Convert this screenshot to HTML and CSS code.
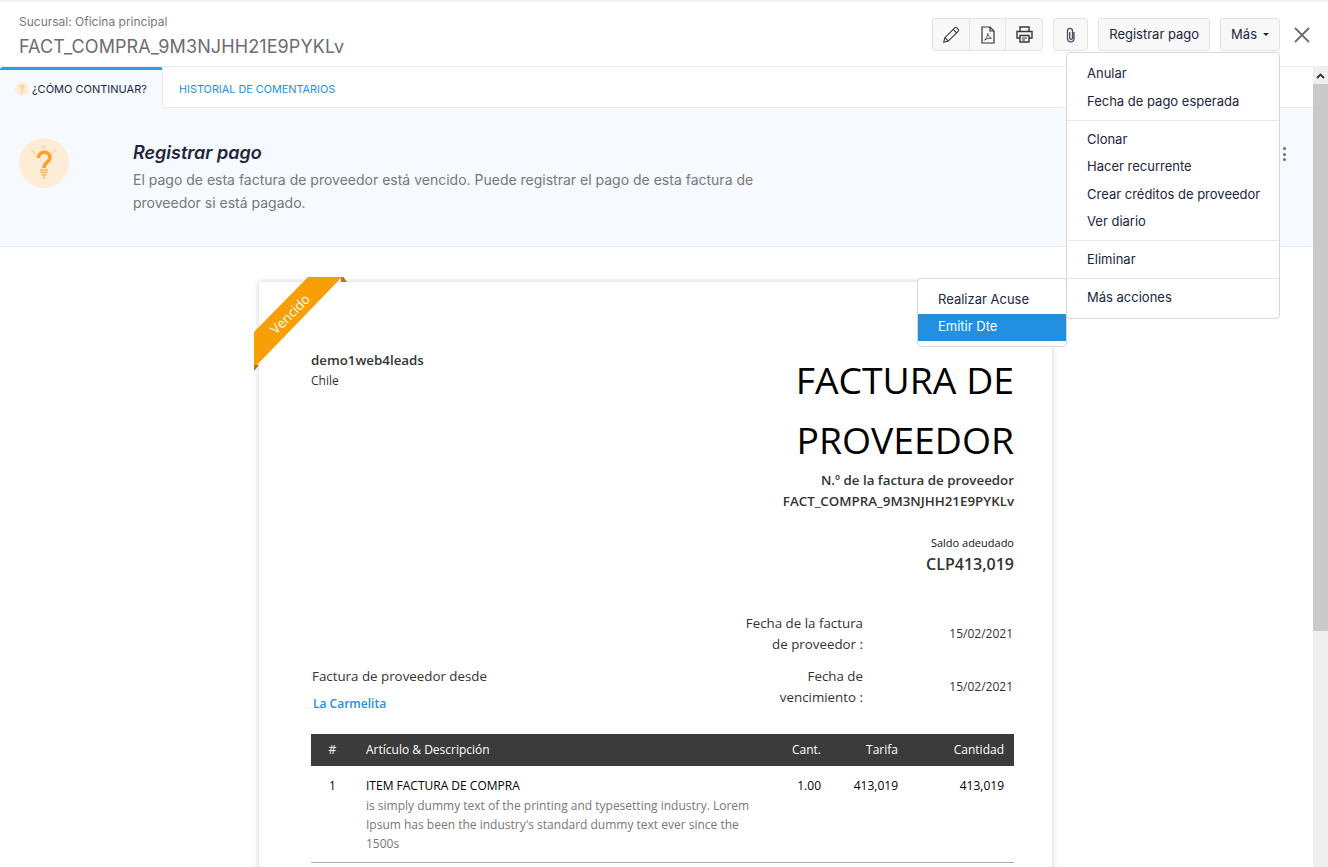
FILE: index.html
```html
<!DOCTYPE html>
<html>
<head>
  <meta charset="UTF-8">
  <title>Factura de proveedor</title>
  <link rel="stylesheet" href="styles.css">
</head>
<body>

  <div class="topBar">
    <div class="titleBlock">
      <div class="branchName">Sucursal: Oficina principal</div>
      <div class="billNumber">FACT_COMPRA_9M3NJHH21E9PYKLv</div>
    </div>
    <div class="actions">
      <div class="btnGroup">
        <span class="btn iconBtn">
          <svg width="18" height="18" viewBox="0 0 18 18" fill="none" stroke="#33343f" stroke-width="1.1"><path d="M1.7 16.3l1.2-4.6L12.7 1.9c.6-.6 1.5-.6 2.1 0l1.3 1.3c.6.6.6 1.5 0 2.1L6.3 15.1z"/><path d="M2.9 11.7l3.4 3.4M11.2 3.4l3.4 3.4"/></svg>
        </span>
        <span class="btn iconBtn">
          <svg width="14" height="18" viewBox="0 0 14 18" fill="none" stroke="#33343f" stroke-width="1.2"><path d="M1 1h8l4 4v12H1z"/><path d="M9 1v4h4"/><path d="M3.5 14c1.5-.8 3-3.5 3.3-6.5.4 2.5 1.6 4.2 3.7 4.8-2.2-.2-4.8.4-7 1.7z" stroke-width=".8"/></svg>
        </span>
        <span class="btn iconBtn">
          <svg width="17" height="17" viewBox="0 0 17 17" fill="none" stroke="#33343f" stroke-width="1.4"><path d="M4 5V1h9v4"/><path d="M4 12H1V5.5h15V12h-3"/><path d="M4 9.5h9V16H4z"/><path d="M6 12h5M6 14h3" stroke-width="1"/></svg>
        </span>
      </div>
      <span class="btn iconBtn clipBtn">
        <svg width="10" height="16" viewBox="0 0 10 16" fill="none" stroke="#4a4b5c" stroke-width="1.3"><path d="M8 5v6.5c0 4.5-6.5 4.5-6.5 0V4c0-3.5 5-3.5 5 0v7c0 1.8-2.800 1.8-2.800 0V5"/></svg>
      </span>
      <span class="btn textBtn">Registrar pago</span>
      <span class="btn textBtn moreBtn">Más <i class="caret"></i></span>
      <svg class="closeIcon" width="16" height="16" viewBox="0 0 16 16" stroke="#6c6c72" stroke-width="1.8"><path d="M1 1l14 14M15 1L1 15"/></svg>
    </div>
  </div>

  <div class="mainArea">
    <div class="pane">
      <div class="tabs">
        <div class="tab tabActive">
          <svg class="tabIcon" width="14" height="14" viewBox="0 0 14 14"><circle cx="7" cy="7" r="7" fill="#ffecd6"/><text x="7" y="10.5" text-anchor="middle" class="tabIconMark">?</text></svg>
          ¿CÓMO CONTINUAR?
        </div>
        <div class="tab">HISTORIAL DE COMENTARIOS</div>
      </div>

      <div class="banner">
        <svg class="bannerIcon" width="50" height="50" viewBox="0 0 50 50">
          <circle cx="25" cy="25" r="25" fill="#ffecd6"/>
          <path d="M25 7v4M12 12l5 4M37 12l-5 4" stroke="#ffc078" stroke-width="1"/>
          <path d="M19.5 20c0-7.5 11.5-7.5 11.5-.5 0 5-6 4.5-6 10.5" fill="none" stroke="#f9a428" stroke-width="3.5"/>
          <path d="M21 32h8M21.5 34.5h7M22.5 37h5M24 39.5h2" stroke="#f9b35c" stroke-width="1.3"/>
        </svg>
        <div class="bannerText">
          <div class="bannerTitle">Registrar pago</div>
          <div class="bannerDesc">El pago de esta factura de proveedor está vencido. Puede registrar el pago de esta factura de proveedor si está pagado.</div>
        </div>
        <span class="bannerDots"><i></i><i></i><i></i></span>
      </div>

      <div class="docArea">
        <div class="doc">
          <div class="ribbon">
            <div class="ribbonBand"><span>Vencido</span></div>
          </div>
          <div class="docHead">
            <div>
              <div class="orgName">demo1web4leads</div>
              <div class="orgCountry">Chile</div>
            </div>
            <div class="docTitleBlock">
              <div class="docTitle">FACTURA DE PROVEEDOR</div>
              <div class="docNumLabel">N.º de la factura de proveedor</div>
              <div class="docNum">FACT_COMPRA_9M3NJHH21E9PYKLv</div>
              <div class="balanceLabel">Saldo adeudado</div>
              <div class="balance">CLP413,019</div>
            </div>
          </div>

          <div class="docMeta">
            <div class="vendor">
              <div class="vendorLabel">Factura de proveedor desde</div>
              <div class="vendorName">La Carmelita</div>
            </div>
            <div class="dates">
              <div class="dateRow">
                <div class="dateLabel">Fecha de la factura de proveedor :</div>
                <div class="dateValue">15/02/2021</div>
              </div>
              <div class="dateRow">
                <div class="dateLabel">Fecha de vencimiento :</div>
                <div class="dateValue">15/02/2021</div>
              </div>
            </div>
          </div>

          <table class="itemTable">
            <thead>
              <tr>
                <th class="colNum">#</th>
                <th class="colItem">Artículo &amp; Descripción</th>
                <th class="colQty">Cant.</th>
                <th class="colRate">Tarifa</th>
                <th class="colAmount">Cantidad</th>
              </tr>
            </thead>
            <tbody>
              <tr>
                <td class="colNum">1</td>
                <td class="colItem">
                  ITEM FACTURA DE COMPRA
                  <div class="itemDesc">is simply dummy text of the printing and typesetting industry. Lorem Ipsum has been the industry's standard dummy text ever since the 1500s</div>
                </td>
                <td class="colQty">1.00</td>
                <td class="colRate">413,019</td>
                <td class="colAmount">413,019</td>
              </tr>
            </tbody>
          </table>
        </div>
      </div>
    </div>

    <div class="scrollBar">
      <div class="scrollUp"><svg width="9" height="6" viewBox="0 0 9 6" fill="none" stroke="#2e2f3a" stroke-width="1.8"><path d="M1 5l3.5-3.5L8 5"/></svg></div>
      <div class="scrollThumb"></div>
    </div>
  </div>

  <div class="menu subMenu">
    <div class="menuItem">Realizar Acuse</div>
    <div class="menuItem menuItemActive">Emitir Dte</div>
  </div>

  <div class="menu moreMenu">
    <div class="menuItem">Anular</div>
    <div class="menuItem">Fecha de pago esperada</div>
    <div class="menuLine"></div>
    <div class="menuItem">Clonar</div>
    <div class="menuItem">Hacer recurrente</div>
    <div class="menuItem">Crear créditos de proveedor</div>
    <div class="menuItem">Ver diario</div>
    <div class="menuLine"></div>
    <div class="menuItem">Eliminar</div>
    <div class="menuLine"></div>
    <div class="menuItem">Más acciones</div>
  </div>

</body>
</html>
```

FILE: styles.css
```css
html, body {
  margin: 0;
  height: 867px;
  overflow: hidden;
  background-color: #fff;
  font-family: Inter, "Liberation Sans", sans-serif;
  color: #21263c;
}

/* header */
.topBar {
  display: flex;
  align-items: flex-start;
  justify-content: space-between;
  height: 64px;
  border-top: 2px solid #f1f1f1;
  border-bottom: 1px solid #eee;
}
.titleBlock {
  padding: 12px 0 0 19px;
}
.branchName {
  font-size: 12px;
  line-height: 16px;
  color: #777;
}
.billNumber {
  margin-top: 5px;
  font-size: 18px;
  line-height: 24px;
  letter-spacing: .1px;
  color: #6c6c72;
}
.actions {
  display: flex;
  align-items: center;
  padding: 16px 18px 0 0;
}
.btn {
  display: flex;
  align-items: center;
  justify-content: center;
  box-sizing: border-box;
  height: 33px;
  background-color: #f8f8f8;
  border: 1px solid #e3e3e3;
  border-radius: 3px;
  font-size: 13px;
}
.btnGroup {
  display: flex;
}
.btnGroup .iconBtn {
  width: 37px;
  border-radius: 0;
  margin-left: -1px;
}
.btnGroup .iconBtn:first-child {
  width: 38px;
  margin-left: 0;
  border-radius: 3px 0 0 3px;
}
.btnGroup .iconBtn:last-child {
  width: 38px;
  border-radius: 0 3px 3px 0;
}
.clipBtn {
  width: 35px;
  margin-left: 10px;
}
.textBtn {
  margin-left: 10px;
  padding: 0 10px 1px;
}
.moreBtn {
  gap: 6px;
}
.caret {
  margin-top: 1px;
  border-top: 3px solid #21263c;
  border-left: 3px solid transparent;
  border-right: 3px solid transparent;
}
.closeIcon {
  margin-left: 14px;
}

/* main */
.mainArea {
  display: flex;
  height: 800px;
}
.pane {
  flex: 1;
  min-width: 0;
  overflow: hidden;
}
.scrollBar {
  width: 15px;
  background-color: #efefef;
}
.scrollUp {
  display: flex;
  align-items: center;
  justify-content: center;
  height: 17px;
}
.scrollThumb {
  height: 547px;
  background-color: #c9c9c9;
}

.tabs {
  display: flex;
  height: 40px;
  border-bottom: 1px solid #e8ecf2;
}
.tab {
  display: flex;
  align-items: center;
  padding: 3px 16px 0;
  font-size: 10.85px;
  color: #2490e0;
  flex: 0 0 auto;
}
.tabActive {
  gap: 3px;
  box-sizing: border-box;
  width: 163px;
  height: 41px;
  padding: 0 0 0 15px;
  font-size: 11px;
  color: #21263c;
  background-color: #f6f9fe;
  border-top: 3px solid #2b9ee4;
  border-right: 1px solid #e8ecf2;
  border-radius: 3px 3px 0 0;
}
.tabIconMark {
  font-size: 10px;
  font-weight: 700;
  fill: #fbc98a;
}

.banner {
  display: flex;
  align-items: flex-start;
  height: 139px;
  box-sizing: border-box;
  padding: 30px 27px 0 19px;
  background-color: #f6f9fe;
  border-bottom: 1px solid #e8ecf2;
}
.bannerIcon {
  flex: 0 0 auto;
}
.bannerText {
  width: 640px;
  margin: 3px 0 0 64px;
  flex: 0 0 auto;
}
.bannerTitle {
  font-size: 18px;
  line-height: 24px;
  font-weight: 600;
  font-style: italic;
  color: #21263c;
}
.bannerDesc {
  margin-top: 3px;
  font-size: 14px;
  line-height: 23px;
  color: #777;
}
.bannerDots {
  display: flex;
  flex-direction: column;
  gap: 2.5px;
  margin: 9px 0 0 auto;
}
.bannerDots i {
  width: 3px;
  height: 3px;
  border-radius: 50%;
  background-color: #6c6c72;
}

/* invoice */
.docArea {
  display: flex;
  justify-content: center;
  padding: 35px 2px 0 0;
}
.doc {
  position: relative;
  box-sizing: border-box;
  width: 793px;
  height: 700px;
  flex: 0 0 auto;
  padding: 69px 38px 0 52px;
  background-color: #fff;
  box-shadow: 0 0 6px #ccc;
  font-family: "Open Sans", "Liberation Sans", sans-serif;
  color: #333;
}
.ribbon {
  position: absolute;
  left: -5px;
  top: -5px;
  width: 94px;
  height: 94px;
}
.ribbon::before,
.ribbon::after {
  content: "";
  position: absolute;
  background-color: #b4742e;
}
.ribbon::before {
  left: 87px;
  top: 0;
  width: 6px;
  height: 5px;
  clip-path: polygon(0 0, 40% 0, 100% 100%, 0 100%);
}
.ribbon::after {
  left: 0;
  top: 88px;
  width: 5px;
  height: 6px;
  clip-path: polygon(0 0, 100% 0, 100% 0, 0 100%);
}
.ribbonBand {
  position: absolute;
  left: 0;
  top: 0;
  width: 94px;
  height: 94px;
  background-color: #f79f05;
  clip-path: polygon(54px 0, 88px 0, 0 91px, 0 55px);
}
.ribbonBand span {
  position: absolute;
  left: 4px;
  top: 29px;
  width: 64px;
  color: #fff;
  font-size: 13.33px;
  line-height: 16px;
  text-align: center;
  transform: rotate(-45deg);
}
.docHead {
  display: flex;
  justify-content: space-between;
}
.orgName {
  font-size: 13.33px;
  font-weight: 600;
  line-height: 18px;
}
.orgCountry {
  margin-top: 3px;
  font-size: 12px;
  line-height: 18px;
}
.docTitleBlock {
  width: 300px;
  margin-top: -1px;
  text-align: right;
}
.docTitle {
  font-size: 37.33px;
  line-height: 60px;
  color: #000;
}
.docNumLabel,
.docNum {
  font-size: 13.33px;
  font-weight: 600;
  line-height: 21px;
}
.balanceLabel {
  margin-top: 23px;
  font-size: 11px;
  line-height: 15px;
  color: #111;
}
.balance {
  margin-top: 3px;
  font-size: 16px;
  font-weight: 600;
  line-height: 22px;
}
.docMeta {
  display: flex;
  justify-content: space-between;
  align-items: flex-start;
  margin-top: 38px;
}
.vendor {
  padding-top: 53px;
  margin-bottom: -6px;
}
.vendorLabel {
  font-size: 13.33px;
  line-height: 21px;
  margin-left: 1px;
}
.vendorName {
  margin: 7px 0 0 2px;
  font-size: 12px;
  font-weight: 600;
  line-height: 20px;
  color: #2490e0;
}
.dateRow {
  display: flex;
  align-items: center;
  height: 42px;
  margin-bottom: 11px;
}
.dateRow:last-child {
  margin-bottom: 0;
}
.dateLabel {
  width: 124px;
  font-size: 13.33px;
  line-height: 21px;
  text-align: right;
}
.dateValue {
  box-sizing: border-box;
  width: 151px;
  padding: 0 1px 2px 0;
  font-size: 12px;
  text-align: right;
}
.itemTable {
  width: 703px;
  margin-top: 26px;
  border-collapse: collapse;
  table-layout: fixed;
  font-size: 12px;
}
.itemTable th,
.itemTable td {
  box-sizing: border-box;
}
.itemTable th {
  height: 32px;
  padding: 0 10px 2px;
  background-color: #3c3b3b;
  color: #fff;
  font-weight: 400;
  text-align: left;
}
.itemTable td {
  padding: 10px 10px 9px;
  vertical-align: top;
  color: #000;
  line-height: 19px;
  border-bottom: 1px solid #adadad;
}
.itemTable .colNum {
  width: 45px;
  padding-left: 0;
  padding-right: 2px;
  text-align: center;
}
.itemTable .colQty,
.itemTable .colRate,
.itemTable .colAmount {
  text-align: right;
}
.colQty {
  width: 69px;
}
.colRate {
  width: 77px;
}
.colAmount {
  width: 106px;
}
.itemDesc {
  margin-top: 1px;
  color: #777;
}

/* menus */
.menu {
  position: absolute;
  box-sizing: border-box;
  background-color: #fff;
  border: 1px solid #d7d7dd;
  border-radius: 4px;
  font-size: 13px;
}
.moreMenu {
  left: 1066px;
  top: 52px;
  width: 214px;
  height: 267px;
  padding-top: 7px;
}
.subMenu {
  left: 917px;
  top: 278px;
  width: 150px;
  height: 69px;
  padding-top: 7px;
}
.menuItem {
  height: 27.5px;
  line-height: 27px;
  padding-left: 20px;
}
.menuItemActive {
  background-color: #228fe0;
  color: #fff;
  line-height: 25px;
}
.menuLine {
  margin: 4.5px 0 5px;
  border-top: 1px solid #e8e8e8;
}
```
